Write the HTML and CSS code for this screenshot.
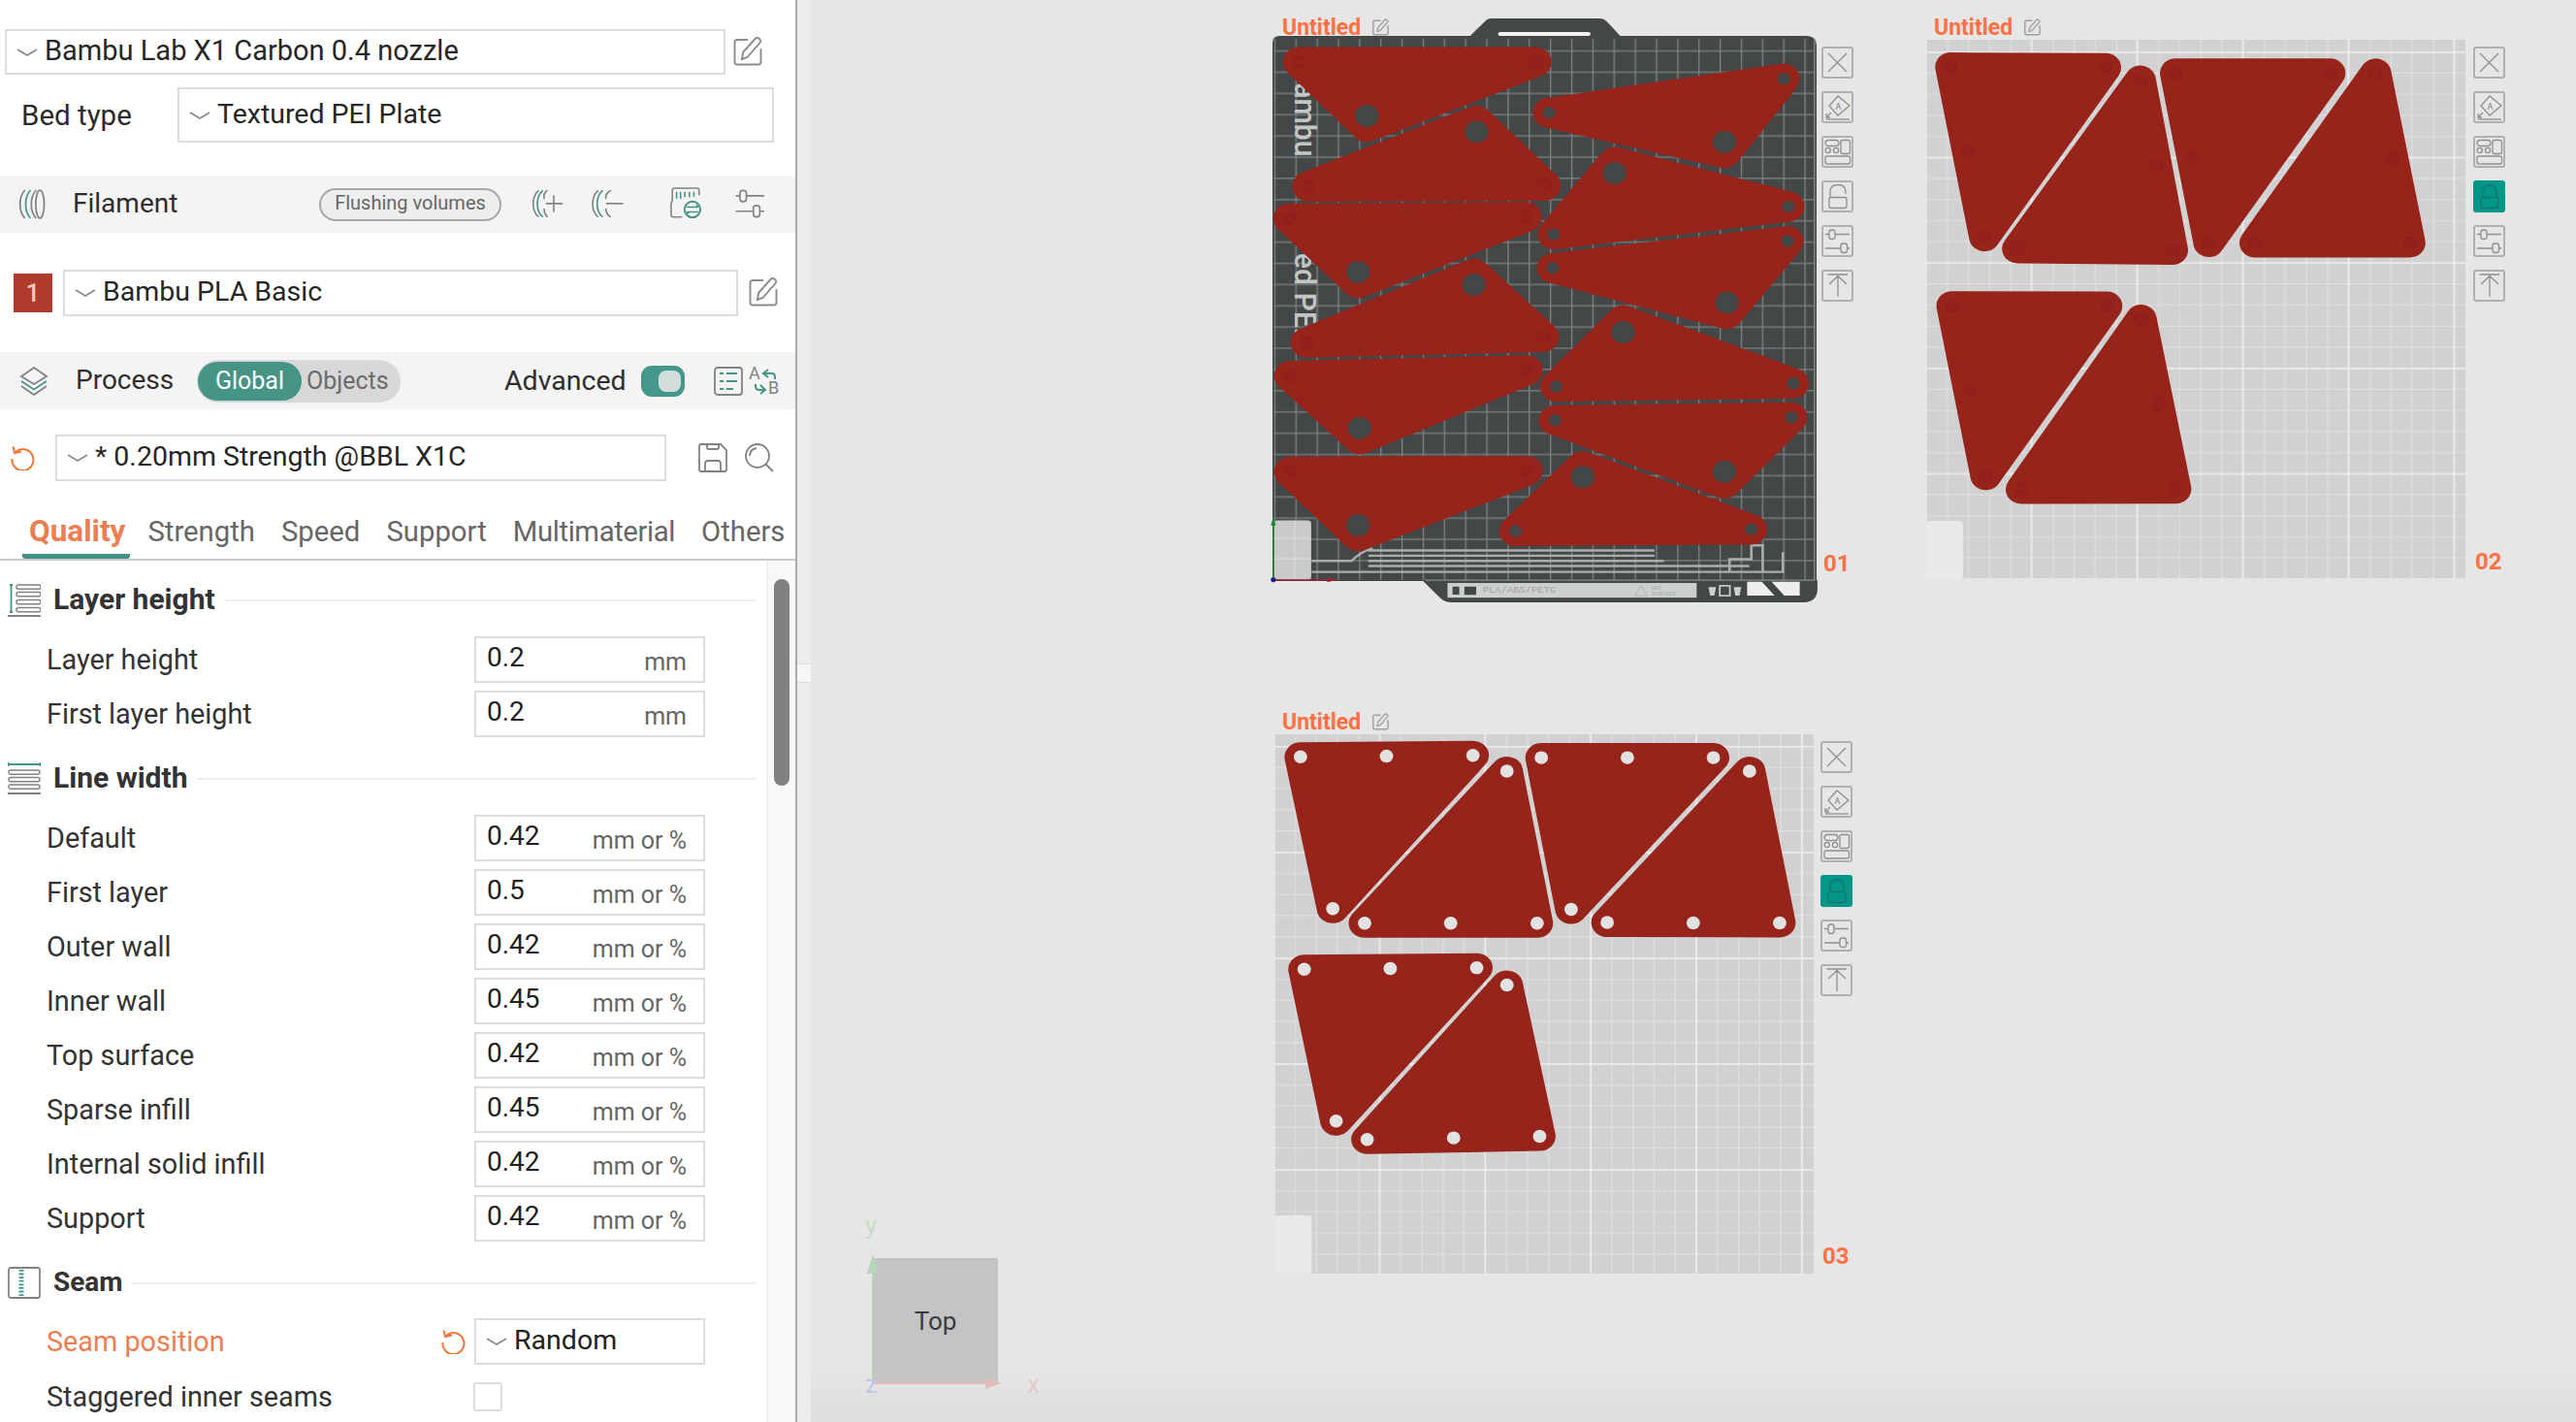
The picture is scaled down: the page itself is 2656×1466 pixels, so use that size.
FILE: index.html
```html
<!DOCTYPE html>
<html lang="en">
<head>
<meta charset="utf-8">
<title>Bambu Studio</title>
<link rel="stylesheet" href="styles.css">
</head>
<body>
<svg class="defs" aria-hidden="true">
  <symbol id="chev" viewBox="0 0 22 8"><path d="M1 1 L11 7 L21 1" fill="none" stroke="#8a8a8a" stroke-width="1.6"/></symbol>
  <symbol id="edit" viewBox="0 0 30 30"><path d="M15 3 H4 Q1.5 3 1.500 5.500 V26 Q1.500 28.500 4 28.500 H26 Q28.500 28.500 28.500 26 V12" fill="none" stroke="#8c8c8c" stroke-width="1.900"/><path d="M9 23 L10 16 L23 1.500 Q25 0 27 2 Q29 4 27.500 6 L14.500 21 Z" fill="#fff" stroke="#8c8c8c" stroke-width="1.900"/></symbol>
  <symbol id="edit-sm" viewBox="0 0 30 30"><path d="M15 3 H4 Q1.5 3 1.500 5.500 V26 Q1.500 28.500 4 28.500 H26 Q28.500 28.500 28.500 26 V12" fill="none" stroke="#a0a0a0" stroke-width="2.600"/><path d="M9 23 L10 16 L23 1.500 Q25 0 27 2 Q29 4 27.500 6 L14.500 21 Z" fill="#e6e6e6" stroke="#a0a0a0" stroke-width="2.400"/></symbol>
  <symbol id="undo" viewBox="0 0 26 26"><path d="M6 7 A11 11 0 1 1 2.500 14" fill="none" stroke="#f0763c" stroke-width="2"/><path d="M3.500 1.500 L5 8 L12 6.500" fill="none" stroke="#f0763c" stroke-width="2"/></symbol>

  <symbol id="t-x" viewBox="2 2 29 29"><path d="M7 7 L26 26 M26 7 L7 26" stroke="#8f8f8f" stroke-width="1.300" fill="none"/></symbol>
  <symbol id="t-auto" viewBox="2 2 29 29"><g fill="none" stroke="#8f8f8f" stroke-width="1.300"><path d="M17 5 L29 15 L17 25 L8 15 Z"/><path d="M5 29 H29"/><path d="M10 22 L5 27 M5 23 V27 H9"/></g></symbol>
  <symbol id="t-arrange" viewBox="2 2 29 29"><g fill="none" stroke="#8f8f8f" stroke-width="1.300"><rect x="4" y="4.500" width="14" height="6" rx="3"/><circle cx="6.700" cy="15" r="2.600"/><circle cx="15" cy="15" r="2.600"/><rect x="20" y="4.500" width="9.500" height="14" rx="2"/><rect x="4" y="21" width="25.500" height="8" rx="2"/></g></symbol>
  <symbol id="t-lock" viewBox="2 2 29 29"><g fill="none" stroke="#8f8f8f" stroke-width="1.300"><path d="M9 17 V12 Q9 4.500 17 4.500 Q25 4.500 25 12 V14"/><rect x="8" y="17.500" width="18" height="11" rx="2"/></g></symbol>
  <symbol id="t-lock-on" viewBox="2 2 29 29"><g fill="none" stroke="#16786c" stroke-width="1.500"><path d="M10 17 V12 Q10 5 17 5 Q24 5 24 12 V17"/><rect x="8" y="17.500" width="18" height="11" rx="3"/></g></symbol>
  <symbol id="t-slide" viewBox="2 2 29 29"><g fill="none" stroke="#8f8f8f" stroke-width="1.300"><path d="M4 9.500 H29 M4 24 H29"/><rect x="8" y="5" width="6" height="9.500" rx="2.500" fill="#e6e6e6"/><rect x="20" y="19" width="6.500" height="9.500" rx="2.500" fill="#e6e6e6"/></g></symbol>
  <symbol id="t-top" viewBox="2 2 29 29"><path d="M6.500 5 H27 M17 7 V28 M8 15 L17 6.500 L26 15" fill="none" stroke="#8f8f8f" stroke-width="1.300"/></symbol>

  <pattern id="grid-dark" patternUnits="userSpaceOnUse" x="56" y="128" width="50.400" height="53.600"><path d="M1.500 0 V53.600 M0 2 H50.400" stroke="#7f8383" stroke-width="3" fill="none"/></pattern>
  <pattern id="grid-2" patternUnits="userSpaceOnUse" x="35" y="133" width="259" height="275"><path d="M55 0 V275 M106.800 0 V275 M158.600 0 V275 M210.400 0 V275 M0 57 H259 M0 112 H259 M0 167 H259 M0 222 H259" stroke="#e2e2e2" stroke-width="2.400" fill="none"/><path d="M2.500 0 V275 M0 2.500 H259" stroke="#efefef" stroke-width="4" fill="none"/></pattern>
  <pattern id="grid-3" patternUnits="userSpaceOnUse" x="52" y="148" width="251.500" height="276"><path d="M52.800 0 V276 M103 0 V276 M153.300 0 V276 M203.600 0 V276 M0 57 H251.500 M0 112 H251.500 M0 167 H251.500 M0 222 H251.500" stroke="#e2e2e2" stroke-width="2.400" fill="none"/><path d="M2.500 0 V276 M0 2.500 H251.500" stroke="#efefef" stroke-width="4" fill="none"/></pattern>
</svg>

<div class="app">
  <aside class="sidebar">
    <div class="row-printer">
      <div class="combo combo-printer"><svg class="chev"><use href="#chev"/></svg><span>Bambu Lab X1 Carbon 0.4 nozzle</span></div>
      <svg class="ico30"><use href="#edit"/></svg>
    </div>
    <div class="row-bed">
      <span class="bed-label">Bed type</span>
      <div class="combo combo-bed"><svg class="chev"><use href="#chev"/></svg><span>Textured PEI Plate</span></div>
    </div>

    <div class="bar bar-filament">
      <svg class="ico-spool" viewBox="0 0 30 32" fill="none" stroke-width="1.800"><path d="M8 1 C1 8 1 24 8 31" stroke="#7f8382"/><path d="M14 1 C7 8 7 24 14 31" stroke="#459486"/><path d="M20 1 C13 8 13 24 20 31" stroke="#7f8382"/><ellipse cx="24" cy="16" rx="4.500" ry="15" stroke="#7f8382"/></svg>
      <span class="bar-title bar-title-f">Filament</span>
      <button class="pill-btn">Flushing volumes</button>
      <svg class="ico-fil ico-add" viewBox="50 35 105 100" fill="none" stroke-width="5"><path d="M75 45 C52 65 52 110 75 128" stroke="#7f8382"/><path d="M88 45 C65 65 65 110 88 128" stroke="#459486"/><path d="M102 45 C92 52 90 62 92 72 M92 102 C92 112 95 122 103 128" stroke="#7f8382"/><path d="M97 86 H150 M122 60 V112" stroke="#7f8382"/></svg>
      <svg class="ico-fil ico-sub" viewBox="235 35 105 100" fill="none" stroke-width="5"><path d="M258 45 C235 65 235 110 258 128" stroke="#7f8382"/><path d="M272 45 C249 65 249 110 272 128" stroke="#459486"/><path d="M298 45 C284 52 280 62 282 72 M282 102 C282 112 285 122 297 128" stroke="#7f8382"/><path d="M283 86 H336" stroke="#7f8382"/></svg>
      <svg class="ico-fil ico-sync" viewBox="485 35 105 105" fill="none"><path d="M492 80 V45 Q492 38 499 38 H572 Q580 38 580 46 V62" stroke="#7f8382" stroke-width="5"/><path d="M506 50 V72 M519 50 V72 M533 50 V68 M548 50 V68 M563 50 V66" stroke="#459486" stroke-width="5"/><path d="M492 80 Q488 84 488 90 V125 Q488 133 496 133 H524" stroke="#7f8382" stroke-width="5"/><circle cx="558" cy="108" r="26" stroke="#459486" stroke-width="6"/><path d="M538 100 H576 M570 94 L578 100 M578 116 H540 M546 122 L538 116" stroke="#459486" stroke-width="4.500"/></svg>
      <svg class="ico-fil ico-tune" viewBox="680 35 100 100" fill="none" stroke="#7f8382" stroke-width="5"><path d="M685 62 H698 M718 62 H774 M685 110 H738 M762 110 H774"/><rect x="698" y="45" width="20" height="35" rx="9"/><rect x="740" y="92" width="20" height="36" rx="9"/></svg>
    </div>

    <div class="row-filament">
      <span class="badge">1</span>
      <div class="combo combo-filament"><svg class="chev"><use href="#chev"/></svg><span>Bambu PLA Basic</span></div>
      <svg class="ico30"><use href="#edit"/></svg>
    </div>

    <div class="bar bar-process">
      <svg class="ico-layers" viewBox="0 0 30 30" fill="none" stroke-width="1.800"><path d="M15 1 L28 10 L15 18 L2 10 Z" stroke="#7f8382"/><path d="M2 15 L15 23.500 L28 15" stroke="#459486"/><path d="M2 20 L15 29 L28 20" stroke="#7f8382"/></svg>
      <span class="bar-title bar-title-p">Process</span>
      <div class="seg"><span class="seg-on">Global</span><span class="seg-off">Objects</span></div>
      <span class="adv">Advanced</span>
      <span class="toggle"><span class="knob"></span></span>
      <svg class="ico-list" viewBox="0 0 30 30" fill="none"><rect x="1" y="1" width="28" height="28" rx="3" stroke="#7f8382" stroke-width="1.800"/><path d="M6 7 H10 M13 7 H24 M6 15 H10 M13 15 H24 M6 23 H10 M13 23 H20" stroke="#459486" stroke-width="1.800"/></svg>
      <svg class="ico-ab" viewBox="0 0 32 32" fill="none"><text x="0" y="14" class="ab-letter">A</text><text x="20" y="29" class="ab-letter">B</text><path d="M20 4 L15 8 L20 12 M16 8 H24 Q27 8 27 12 V14" stroke="#459486" stroke-width="2"/><path d="M7 19 V21 Q7 25 11 25 H17 M12 20 L17 25 L12 29" stroke="#459486" stroke-width="2"/></svg>
    </div>

    <div class="row-preset">
      <svg class="ico-undo"><use href="#undo"/></svg>
      <div class="combo combo-preset"><svg class="chev"><use href="#chev"/></svg><span>* 0.20mm Strength @BBL X1C</span></div>
      <svg class="ico-save" viewBox="0 0 30 30" fill="none" stroke="#7f8382" stroke-width="1.800"><path d="M3 1 H23 L29 7 V27 Q29 29 27 29 H3 Q1 29 1 27 V3 Q1 1 3 1 Z"/><path d="M9 1 V4 Q9 6 11 6 H19 Q21 6 21 4 V1"/><path d="M7 29 V21 Q7 18 10 18 H20 Q23 18 23 21 V29"/></svg>
      <svg class="ico-search" viewBox="0 0 30 30" fill="none" stroke="#7f8382" stroke-width="1.800"><circle cx="13" cy="13" r="12"/><path d="M21.500 21.500 L29 29"/><path d="M5 13 Q5 6 12 5"/></svg>
    </div>

    <nav class="tabs">
      <span class="tab tab-on">Quality</span>
      <span class="tab">Strength</span>
      <span class="tab">Speed</span>
      <span class="tab">Support</span>
      <span class="tab tab-wide">Multimaterial</span>
      <span class="tab">Others</span>
    </nav>

    <div class="scroll">
      <div class="form">
        <div class="head">
          <svg class="head-ico" viewBox="0 0 34 34" fill="none"><path d="M2 1 H5 M3.500 1 V28 M2 29 H5" stroke="#459486" stroke-width="1.800"/><g stroke="#7f8382" stroke-width="1.400"><rect x="9" y="1" width="25" height="4.300" rx="2"/><rect x="9" y="8.500" width="25" height="4.300" rx="2"/><rect x="9" y="16.500" width="25" height="4.300" rx="2"/><rect x="9" y="24.500" width="25" height="4.300" rx="2"/></g><path d="M0 33 H34" stroke="#7f8382" stroke-width="1.800"/></svg>
          <b>Layer height</b><i class="rule"></i>
        </div>
        <div class="field"><span class="lbl">Layer height</span><div class="input"><span class="val">0.2</span><span class="unit">mm</span></div></div>
        <div class="field"><span class="lbl">First layer height</span><div class="input"><span class="val">0.2</span><span class="unit">mm</span></div></div>

        <div class="head head-next">
          <svg class="head-ico" viewBox="0 0 34 34" fill="none"><path d="M0.500 0 V4 M33.500 0 V4 M0 2 H34" stroke="#459486" stroke-width="1.800"/><g stroke="#7f8382" stroke-width="1.400"><rect x="1" y="8" width="32" height="4.300" rx="2"/><rect x="1" y="15.500" width="32" height="4.300" rx="2"/><rect x="1" y="23" width="32" height="4.300" rx="2"/></g><path d="M0 32 H34" stroke="#7f8382" stroke-width="1.800"/></svg>
          <b>Line width</b><i class="rule"></i>
        </div>
        <div class="field"><span class="lbl">Default</span><div class="input"><span class="val">0.42</span><span class="unit">mm or %</span></div></div>
        <div class="field"><span class="lbl">First layer</span><div class="input"><span class="val">0.5</span><span class="unit">mm or %</span></div></div>
        <div class="field"><span class="lbl">Outer wall</span><div class="input"><span class="val">0.42</span><span class="unit">mm or %</span></div></div>
        <div class="field"><span class="lbl">Inner wall</span><div class="input"><span class="val">0.45</span><span class="unit">mm or %</span></div></div>
        <div class="field"><span class="lbl">Top surface</span><div class="input"><span class="val">0.42</span><span class="unit">mm or %</span></div></div>
        <div class="field"><span class="lbl">Sparse infill</span><div class="input"><span class="val">0.45</span><span class="unit">mm or %</span></div></div>
        <div class="field"><span class="lbl">Internal solid infill</span><div class="input"><span class="val">0.42</span><span class="unit">mm or %</span></div></div>
        <div class="field"><span class="lbl">Support</span><div class="input"><span class="val">0.42</span><span class="unit">mm or %</span></div></div>

        <div class="head head-next head-seam">
          <svg class="head-ico" viewBox="0 0 34 34" fill="none"><rect x="1" y="1" width="32" height="31" rx="2" stroke="#7f8382" stroke-width="1.800"/><path d="M14 3 V30" stroke="#459486" stroke-width="5" stroke-dasharray="1.800 1.800"/></svg>
          <b>Seam</b><i class="rule"></i>
        </div>
        <div class="field field-seam"><span class="lbl lbl-mod">Seam position</span><svg class="ico-undo-sm"><use href="#undo"/></svg><div class="input input-select"><svg class="chev"><use href="#chev"/></svg><span class="val-select">Random</span></div></div>
        <div class="field"><span class="lbl">Staggered inner seams</span><span class="check"></span></div>
      </div>
      <div class="track"><div class="thumb"></div></div>
    </div>
  </aside>

  <div class="divider"></div>

  <main class="canvas">
    <div class="strip"><span class="grip"></span></div>

    <section class="plate plate-1">
      <div class="plate-head"><span class="plate-name">Untitled</span><svg class="plate-edit"><use href="#edit-sm"/></svg></div>
      <div class="plate-body">
        <svg class="bed bed-1" viewBox="52 92 1293 1376" preserveAspectRatio="none">
          <path d="M520 94 L560 52 Q563 48 572 48 H830 Q840 48 846 55 L880 94 Z" fill="#434747"/>
          <path d="M70 92 H1320 Q1345 92 1345 118 V1468 H52 V110 Q52 92 70 92 Z" fill="#434747"/>
          <path d="M408 1466 L452 1512 Q462 1522 478 1522 H1310 Q1347 1522 1347 1488 V1466 Z" fill="#434747"/>
          <rect x="588" y="82" width="220" height="10" rx="5" fill="#f1f1f1"/>
          <rect x="55" y="100" width="1285" height="1365" fill="url(#grid-dark)"/>
          <path d="M415 1466 H1340 V100" fill="none" stroke="#8a8e8e" stroke-width="3"/>
          <text class="bed-logo" transform="translate(104 210) rotate(90)"><tspan>ambu</tspan></text>
          <text class="bed-logo" transform="translate(104 640) rotate(90)"><tspan>ed PEI</tspan></text>
          <rect x="56" y="1315" width="88" height="150" rx="8" fill="#c9cbca"/>
          <path d="M105 1315 V1465 M56 1360 H144 M56 1412 H144" stroke="#e0e0e0" stroke-width="2"/>
          <g stroke="#a9adab" stroke-width="6" fill="none">
            <path d="M280 1391 H960 M280 1404 H960 M280 1417 H982 M145 1417 H240 Q260 1395 290 1385 M280 1430 H1185 M145 1445 H1265 V1395"/>
            <path d="M1138 1445 V1413 H1190 V1378 H1217 V1445"/>
          </g>
          <rect x="468" y="1473" width="592" height="37" fill="#cdd0cf"/>
          <path d="M480 1482 H496 V1502 H480 Z M508 1482 H536 V1503 H508 Z" fill="#434747"/>
          <text x="552" y="1498" class="bed-small">PLA/ABS/PETG</text>
          <path d="M928 1480 L944 1505 H914 Z" fill="none" stroke="#aeb1b0" stroke-width="2"/>
          <text x="952" y="1490" class="bed-tiny">HOT</text>
          <text x="952" y="1504" class="bed-tiny">SURFACE</text>
          <path d="M1088 1483 H1106 L1102 1505 H1092 Z M1148 1483 H1166 L1162 1505 H1152 Z" fill="#cdd0cf"/>
          <rect x="1115" y="1480" width="24" height="25" fill="none" stroke="#cdd0cf" stroke-width="4"/>
          <path d="M1180 1470 H1215 L1245 1505 H1180 Z M1238 1470 H1305 V1505 H1268 Z" fill="#eeeeee"/>
          <g class="piece"><polygon points="115,158 677,158 276,322"/><polygon points="137,472 699,470 537,306"/><polygon points="92,553 654,549 255,716"/><polygon points="133,866 695,852 531,692"/><polygon points="94,950 656,936 259,1110"/><polygon points="94,1192 656,1190 255,1355"/><polygon points="709,286 1267,200 1126,388"/><polygon points="720,593 1278,523 865,410"/><polygon points="718,678 1276,610 1132,794"/><polygon points="726,977 1289,969 885,810"/><polygon points="723,1062 1285,1055 1126,1222"/><polygon points="629,1342 1190,1338 789,1178"/></g>
          <g class="hole-dim"><circle cx="115" cy="158" r="14"/><circle cx="677" cy="158" r="14"/><circle cx="137" cy="472" r="14"/><circle cx="699" cy="470" r="14"/><circle cx="92" cy="553" r="14"/><circle cx="654" cy="549" r="14"/><circle cx="133" cy="866" r="14"/><circle cx="695" cy="852" r="14"/><circle cx="94" cy="950" r="14"/><circle cx="656" cy="936" r="14"/><circle cx="94" cy="1192" r="14"/><circle cx="656" cy="1190" r="14"/></g>
          <g class="hole-dark"><circle cx="276" cy="294" r="28"/><circle cx="537" cy="334" r="28"/><circle cx="255" cy="688" r="28"/><circle cx="531" cy="720" r="28"/><circle cx="259" cy="1082" r="28"/><circle cx="255" cy="1327" r="28"/><circle cx="1126" cy="360" r="28"/><circle cx="865" cy="438" r="28"/><circle cx="1132" cy="765" r="28"/><circle cx="885" cy="840" r="28"/><circle cx="1126" cy="1192" r="28"/><circle cx="789" cy="1205" r="28"/><circle cx="709" cy="286" r="15"/><circle cx="1267" cy="200" r="15"/><circle cx="720" cy="593" r="15"/><circle cx="1278" cy="523" r="15"/><circle cx="718" cy="678" r="15"/><circle cx="1276" cy="610" r="15"/><circle cx="726" cy="977" r="15"/><circle cx="1289" cy="969" r="15"/><circle cx="723" cy="1062" r="15"/><circle cx="1285" cy="1055" r="15"/><circle cx="629" cy="1342" r="15"/><circle cx="1190" cy="1338" r="15"/></g>
          <path d="M54 1465 V1318" stroke="#1b8a2a" stroke-width="3"/><path d="M48 1328 L54 1305 L60 1328 Z" fill="#1b8a2a"/>
          <path d="M54 1465 H185" stroke="#a21f1f" stroke-width="3"/><path d="M182 1459 L205 1465 L182 1471 Z" fill="#a21f1f"/>
          <circle cx="54" cy="1465" r="6" fill="#1c1c8e"/>
        </svg>
        <div class="tools">
          <span class="tool"><svg><use href="#t-x"/></svg></span>
          <span class="tool"><svg viewBox="0 0 29 29"><use href="#t-auto"/><text x="15.500" y="17" class="tool-a">A</text></svg></span>
          <span class="tool"><svg><use href="#t-arrange"/></svg></span>
          <span class="tool"><svg><use href="#t-lock"/></svg></span>
          <span class="tool"><svg><use href="#t-slide"/></svg></span>
          <span class="tool"><svg><use href="#t-top"/></svg></span>
          <span class="plate-num">01</span>
        </div>
      </div>
    </section>

    <section class="plate plate-2">
      <div class="plate-head"><span class="plate-name">Untitled</span><svg class="plate-edit"><use href="#edit-sm"/></svg></div>
      <div class="plate-body">
        <svg class="bed" viewBox="38 103 1322 1407" preserveAspectRatio="none">
          <rect x="38" y="103" width="1322" height="1407" fill="#d1d1d1"/>
          <rect x="38" y="103" width="1322" height="1407" fill="url(#grid-2)"/>
          <rect x="38" y="1358" width="90" height="152" rx="9" fill="#e9e9e9"/>
          <g class="piece"><polygon points="98,174 478,176 181,617"/><polygon points="563,208 262,648 642,652"/><polygon points="649,190 1028,190 731,632"/><polygon points="1140,190 844,633 1224,633"/><polygon points="101,797 481,798 184,1240"/><polygon points="565,832 271,1276 650,1275"/></g>
          <g class="hole-dim"><circle cx="98" cy="174" r="15"/><circle cx="478" cy="176" r="15"/><circle cx="181" cy="617" r="15"/><circle cx="140" cy="395" r="15"/><circle cx="563" cy="208" r="15"/><circle cx="262" cy="648" r="15"/><circle cx="642" cy="652" r="15"/><circle cx="603" cy="431" r="15"/><circle cx="649" cy="190" r="15"/><circle cx="1028" cy="190" r="15"/><circle cx="731" cy="632" r="15"/><circle cx="690" cy="411" r="15"/><circle cx="1140" cy="190" r="15"/><circle cx="844" cy="633" r="15"/><circle cx="1224" cy="633" r="15"/><circle cx="1182" cy="412" r="15"/><circle cx="101" cy="797" r="15"/><circle cx="481" cy="798" r="15"/><circle cx="184" cy="1240" r="15"/><circle cx="143" cy="1018" r="15"/><circle cx="565" cy="832" r="15"/><circle cx="271" cy="1276" r="15"/><circle cx="650" cy="1275" r="15"/><circle cx="607" cy="1053" r="15"/></g>
        </svg>
        <div class="tools">
          <span class="tool"><svg><use href="#t-x"/></svg></span>
          <span class="tool"><svg viewBox="0 0 29 29"><use href="#t-auto"/><text x="15.500" y="17" class="tool-a">A</text></svg></span>
          <span class="tool"><svg><use href="#t-arrange"/></svg></span>
          <span class="tool tool-on"><svg><use href="#t-lock-on"/></svg></span>
          <span class="tool"><svg><use href="#t-slide"/></svg></span>
          <span class="tool"><svg><use href="#t-top"/></svg></span>
          <span class="plate-num">02</span>
        </div>
      </div>
    </section>

    <section class="plate plate-3">
      <div class="plate-head"><span class="plate-name">Untitled</span><svg class="plate-edit"><use href="#edit-sm"/></svg></div>
      <div class="plate-body">
        <svg class="bed" viewBox="55 118 1285 1407" preserveAspectRatio="none">
          <rect x="55" y="118" width="1285" height="1407" fill="#d1d1d1"/>
          <rect x="55" y="118" width="1285" height="1407" fill="url(#grid-3)"/>
          <rect x="55" y="1373" width="89" height="152" rx="9" fill="#e9e9e9"/>
          <g class="piece"><polygon points="117,177 528,173 194,573"/><polygon points="609,214 270,611 681,611"/><polygon points="691,179 1101,179 762,575"/><polygon points="1187,214 848,609 1259,610"/><polygon points="126,731 537,727 202,1127"/><polygon points="609,772 276,1175 687,1167"/></g>
          <g class="hole-light"><ellipse cx="117" cy="177" rx="15" ry="16"/><ellipse cx="322" cy="175" rx="15" ry="16"/><ellipse cx="528" cy="173" rx="15" ry="16"/><ellipse cx="194" cy="573" rx="15" ry="16"/><ellipse cx="609" cy="214" rx="15" ry="16"/><ellipse cx="270" cy="611" rx="15" ry="16"/><ellipse cx="475" cy="611" rx="15" ry="16"/><ellipse cx="681" cy="611" rx="15" ry="16"/><ellipse cx="691" cy="179" rx="15" ry="16"/><ellipse cx="896" cy="179" rx="15" ry="16"/><ellipse cx="1101" cy="179" rx="15" ry="16"/><ellipse cx="762" cy="575" rx="15" ry="16"/><ellipse cx="1187" cy="214" rx="15" ry="16"/><ellipse cx="848" cy="609" rx="15" ry="16"/><ellipse cx="1053" cy="610" rx="15" ry="16"/><ellipse cx="1259" cy="610" rx="15" ry="16"/><ellipse cx="126" cy="731" rx="15" ry="16"/><ellipse cx="331" cy="729" rx="15" ry="16"/><ellipse cx="537" cy="727" rx="15" ry="16"/><ellipse cx="202" cy="1127" rx="15" ry="16"/><ellipse cx="609" cy="772" rx="15" ry="16"/><ellipse cx="276" cy="1175" rx="15" ry="16"/><ellipse cx="482" cy="1171" rx="15" ry="16"/><ellipse cx="687" cy="1167" rx="15" ry="16"/></g>
        </svg>
        <div class="tools">
          <span class="tool"><svg><use href="#t-x"/></svg></span>
          <span class="tool"><svg viewBox="0 0 29 29"><use href="#t-auto"/><text x="15.500" y="17" class="tool-a">A</text></svg></span>
          <span class="tool"><svg><use href="#t-arrange"/></svg></span>
          <span class="tool tool-on"><svg><use href="#t-lock-on"/></svg></span>
          <span class="tool"><svg><use href="#t-slide"/></svg></span>
          <span class="tool"><svg><use href="#t-top"/></svg></span>
          <span class="plate-num">03</span>
        </div>
      </div>
    </section>

    <div class="gizmo">
      <span class="gizmo-face">Top</span>
      <svg class="gizmo-axes" viewBox="0 0 190 200" fill="none">
        <path d="M20 166 V40" stroke="#b8d4b8" stroke-width="2"/><path d="M14 53 L20 33 L26 53 Z" fill="#b8d4b8"/>
        <path d="M20 166 H140" stroke="#e0bcbc" stroke-width="2"/><path d="M136 160 L152 166 L136 172 Z" fill="#e0bcbc"/>
      </svg>
      <span class="axis axis-y">y</span>
      <span class="axis axis-x">x</span>
      <span class="axis axis-z">z</span>
    </div>
  </main>
</div>
</body>
</html>
```

FILE: styles.css
```css
* { box-sizing: border-box; }
html, body { margin: 0; height: 100%; overflow: hidden; }
body { font-family: Roboto, "Noto Sans", sans-serif; color: #2b2b2b; background: #e6e6e6; }
.defs { position: absolute; width: 0; height: 0; overflow: hidden; }
.app { display: flex; width: 2656px; height: 1466px; }

.sidebar { width: 820px; flex: none; background: #fff; display: flex; flex-direction: column; height: 1466px; overflow: hidden; }
.divider { width: 2px; background: #a9a9a9; flex: none; }

.combo { display: flex; align-items: center; border: 2px solid #dcdcdc; background: #fff; font-size: 28.500px; color: #262626; }
.combo span { margin-top: -3px; }
.chev { width: 22px; height: 8px; flex: none; margin-right: 7px; }
.ico30 { width: 30px; height: 30px; flex: none; margin-top: -2px; }

.row-printer { display: flex; align-items: center; height: 47px; margin-top: 30px; padding-left: 5px; gap: 8px; }
.combo-printer { width: 743px; height: 47px; padding-left: 10px; font-size: 29px; }
.row-bed { display: flex; align-items: center; height: 57px; margin-top: 13px; padding-left: 22px; }
.bed-label { width: 161px; font-size: 29.500px; }
.combo-bed { width: 615px; height: 57px; padding-left: 10px; }

.bar { display: flex; align-items: center; height: 59px; background: #f4f4f4; position: relative; flex: none; }
.bar-filament { margin-top: 34px; padding-left: 18px; }
.bar-title { font-size: 28px; color: #2e2e2e; margin-top: -3px; }
.ico-spool { width: 29px; height: 31px; flex: none; }
.bar-title-f { margin-left: 28px; width: 254px; }
.pill-btn { width: 188px; height: 34px; border: 2px solid #a8a8a8; border-radius: 17px; background: #eee; color: #666; font: 20px Roboto, sans-serif; padding: 0 0 3px; flex: none; }
.ico-fil { flex: none; width: 35px; height: 33px; margin-top: -2px; }
.ico-add { margin-left: 30px; }
.ico-sub { margin-left: 27px; }
.ico-sync { margin-left: 46px; }
.ico-tune { margin-left: 31px; }

.row-filament { display: flex; align-items: center; height: 48px; margin-top: 38px; padding-left: 14px; flex: none; }
.badge { width: 40px; height: 40px; background: #b23a2a; color: #eec9c0; font-size: 26px; font-weight: 500; display: flex; align-items: center; justify-content: center; }
.combo-filament { width: 696px; height: 48px; margin-left: 11px; padding-left: 10px; }
.row-filament .ico30 { margin-left: 11px; }

.bar-process { margin-top: 37px; padding-left: 20px; }
.ico-layers { width: 30px; height: 30px; flex: none; }
.bar-title-p { margin-left: 28px; width: 125px; }
.seg { width: 210px; height: 44px; border-radius: 22px; background: #d8d8d8; display: flex; align-items: center; padding-left: 1px; font-size: 25px; flex: none; }
.seg-on { width: 107px; height: 40px; border-radius: 20px; background: #459486; color: #fff; display: flex; align-items: center; justify-content: center; }
.seg-off { color: #6a6a6a; margin-left: 5px; }
.adv { margin-left: 107px; width: 141px; font-size: 28.500px; color: #2e2e2e; }
.toggle { width: 45px; height: 32px; border-radius: 11px; background: #44978a; display: flex; align-items: center; padding-left: 18px; flex: none; }
.knob { width: 23px; height: 22px; border-radius: 8px; background: #d1dedb; }
.ico-list { width: 30px; height: 30px; margin-left: 30px; flex: none; }
.ico-ab { width: 32px; height: 32px; margin-left: 6px; flex: none; overflow: visible; }
.ab-letter { font: 18px Roboto, sans-serif; fill: #7f8382; }

.row-preset { display: flex; align-items: center; height: 48px; margin-top: 26px; padding-left: 10px; flex: none; }
.ico-undo { width: 26px; height: 26px; flex: none; }
.combo-preset { width: 630px; height: 48px; margin-left: 21px; padding-left: 10px; }
.ico-save { width: 30px; height: 30px; margin-left: 33px; flex: none; }
.ico-search { width: 30px; height: 30px; margin-left: 18px; flex: none; }

.tabs { display: flex; height: 82px; border-bottom: 2px solid #c9c9c9; padding: 33px 0 0 30px; flex: none; font-size: 29.300px; color: #666; gap: 27px; }
.tab { height: 47px; line-height: 38px; position: relative; }
.tab-wide { letter-spacing: -0.4px; }
.tab-on { color: #ec7e54; font-weight: 700; font-size: 31.500px; margin-right: -4px; }
.tab-on::after { content: ""; position: absolute; left: -7px; right: -5px; bottom: 0; height: 5px; background: #3f9384; border-radius: 0 0 3px 3px; }

.scroll { flex: 1; display: flex; min-height: 0; }
.form { width: 790px; flex: none; padding: 21px 10px 0 0; }
.track { width: 30px; flex: none; background: #f8f8f8; border-left: 2px solid #f0f0f0; padding: 19px 0 0 6px; }
.thumb { width: 16px; height: 213px; border-radius: 8px; background: #808080; }

.head { display: flex; align-items: center; height: 40px; padding-left: 8px; margin-bottom: 17px; }
.head-next { margin-top: 23px; }
.head-seam { margin-bottom: 16px; }
.head b { font-size: 30px; font-weight: 700; color: #333; margin: -3px 0 0 13px; }
.head-seam b { font-size: 28px; }
.head-ico { width: 34px; height: 34px; flex: none; }
.rule { flex: 1; height: 2px; background: #ededed; margin-left: 10px; }

.field { display: flex; align-items: center; height: 48px; margin-bottom: 8px; padding-left: 48px; }
.field-seam { margin-bottom: 9px; }
.lbl { width: 441px; font-size: 28.800px; color: #333; flex: none; }
.lbl-mod { color: #ec7e54; width: 406px; }
.input { width: 238px; height: 48px; border: 2px solid #dcdcdc; display: flex; align-items: center; justify-content: space-between; padding: 0 17px 0 11px; flex: none; }
.val { font-size: 28px; color: #222; margin-top: -5px; }
.unit { font-size: 25px; color: #666; margin-top: 5px; }
.input-select { justify-content: flex-start; padding-left: 10px; }
.val-select { font-size: 28.500px; color: #222; margin-top: -3px; }
.ico-undo-sm { width: 26px; height: 26px; margin-right: 9px; flex: none; }
.check { width: 30px; height: 30px; border: 2px solid #dcdcdc; border-radius: 3px; margin-left: -1px; }

.canvas { flex: 1; position: relative; background: linear-gradient(#e6e6e6 96%, #dedede); }
.strip { position: absolute; left: 0; top: 0; bottom: 0; width: 14px; background: #ececec; display: flex; align-items: center; }
.grip { display: block; width: 14px; height: 20px; background: #f6f6f6; border-top: 1px solid #dcdcdc; border-bottom: 1px solid #dcdcdc; position: absolute; top: 684px; }

.plate { position: absolute; }
.plate-1 { left: 490px; top: 15px; }
.plate-2 { left: 1164px; top: 15px; }
.plate-3 { left: 492px; top: 731px; }
.plate-head { height: 26px; display: flex; align-items: center; padding-left: 8px; position: relative; }
.plate-1 .plate-head { margin-bottom: -4px; z-index: 1; padding-left: 10px; }
.plate-name { font-size: 23px; font-weight: 700; color: #ff7043; width: 93px; }
.plate-edit { width: 17px; height: 18px; }
.plate-body { display: flex; }
.bed { width: 556px; height: 556px; overflow: visible; flex: none; display: block; }
.bed-1 { width: 561px; height: 562px; }
.tools { display: flex; flex-direction: column; gap: 13px; margin-left: 8px; padding-top: 7px; position: relative; }
.plate-1 .tools { margin-left: 5px; padding-top: 11px; }
.plate-3 .tools { margin-left: 7px; }
.tool { width: 33px; height: 33px; border: 2px solid #b0b0b0; border-radius: 3px; display: block; }
.tool svg { width: 29px; height: 29px; display: block; }
.tool-on { background: #009688; border-color: #009688; }
.tool-a { font: 9px Roboto, sans-serif; fill: #808080; text-anchor: middle; }
.plate-num { position: absolute; left: 2px; bottom: 6px; font-size: 24px; font-weight: 700; color: #ff7043; line-height: 24px; }

.piece polygon { fill: #97241a; stroke: #97241a; stroke-width: 76; stroke-linejoin: round; }
.hole-dim circle { fill: #93231a; stroke: #7f1d15; stroke-width: 1.500; }
.hole-dark circle { fill: #434747; }
.hole-light ellipse { fill: #e2e2e2; rx: 16px; ry: 17px; }
.bed-logo { font: 500 74px Roboto, sans-serif; fill: #c4c6c6; }
.bed-small { font: 24px "Liberation Mono", monospace; fill: #9fa3a2; }
.bed-tiny { font: 14px "Liberation Mono", monospace; fill: #a8abaa; }

.gizmo { position: absolute; left: 60px; top: 1260px; width: 210px; height: 190px; }
.gizmo-face { position: absolute; left: 18px; top: 37px; width: 129px; height: 129px; background: #c4c4c4; border-radius: 2px; display: flex; align-items: center; justify-content: center; font-size: 26px; color: #3a3a3a; }
.gizmo-axes { position: absolute; left: -2px; top: 0; width: 190px; height: 200px; }
.axis { position: absolute; font-size: 26px; line-height: 26px; }
.axis-y { left: 10px; top: -10px; color: #c6dcc6; }
.axis-x { left: 177px; top: 154px; color: #e6c9c9; }
.axis-z { left: 10px; top: 154px; color: #c3c7e0; }
```
